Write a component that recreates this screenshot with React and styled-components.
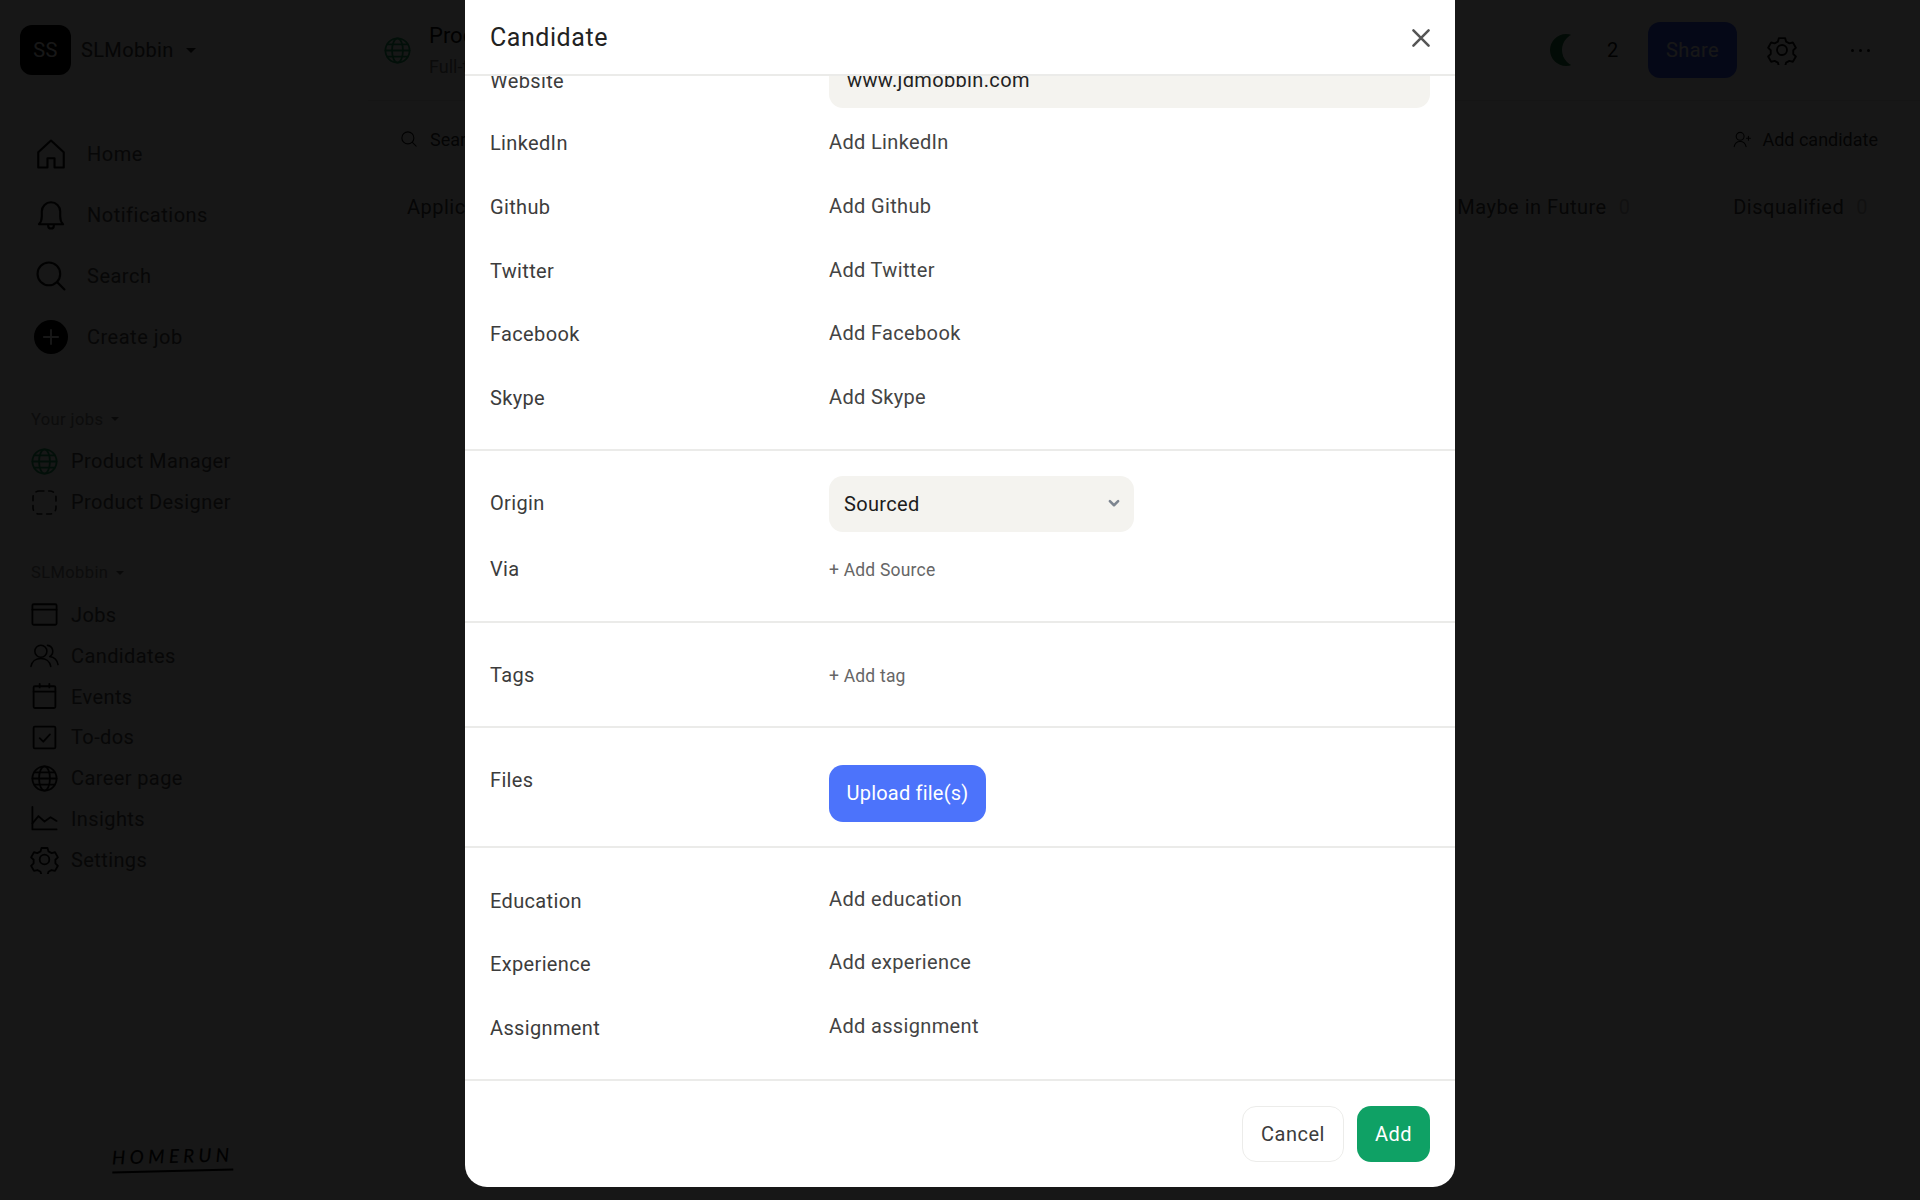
import React from "react";
import styled, { createGlobalStyle } from "styled-components";

const Global = createGlobalStyle`
  html, body { margin: 0; padding: 0; height: 100%; background: #fff; }
  #root { height: 100%; }
  * { box-sizing: border-box; }
  body { font-family: Roboto, "Liberation Sans", sans-serif; color: #111; }
`;

const Page = styled.div`position: relative; width: 1920px; height: 1200px; overflow: hidden; display: flex;`;
const Sidebar = styled.aside`
  width: 355px; flex: none; display: flex; flex-direction: column; background: #f6f6f6; padding: 25px 20px 28px;
`;
const Brand = styled.div`display: flex; align-items: center; height: 50px; gap: 10px; font-size: 20px; letter-spacing: .35px; color: #444; margin-bottom: 48px;`;
const BrandMark = styled.div`
  width: 51px; height: 50px; border-radius: 12px; background: #000; color: #fff; display: flex; align-items: center; justify-content: center; font-size: 20px;
`;
const Caret = styled.span`
  display: inline-block; width: 0; height: 0; border-left: ${p => p.$s || 5}px solid transparent; border-right: ${p => p.$s || 5}px solid transparent;
  border-top: ${p => p.$s || 5}px solid ${p => p.$c || "#000"}; margin-left: ${p => p.$m || 4}px;
`;
const PrimaryNav = styled.nav`display: flex; flex-direction: column; padding-left: 14px; margin-bottom: 38px;`;
const PrimaryItem = styled.div`display: flex; align-items: center; height: 61px; gap: 19px; font-size: 20px; letter-spacing: .5px; color: #555; svg { width: 34px; height: 34px; flex: none; }`;
const GroupTitle = styled.div`display: flex; align-items: center; height: 28px; padding-left: 11px; margin-bottom: 8px; font-size: 16.5px; letter-spacing: .4px; color: #888;`;
const SecondaryNav = styled.nav`display: flex; flex-direction: column; padding-left: 10px; margin-bottom: 36px;`;
const SecondaryItem = styled.div`display: flex; align-items: center; height: 40.8px; gap: 12px; font-size: 20px; letter-spacing: .4px; color: #555; svg { width: 29px; height: 29px; flex: none; }`;
const LogoWrap = styled.div`margin-top: auto; padding-left: 92px;`;
const Logo = styled.div`
  display: inline-block; font-size: 19px; font-style: italic; font-weight: 500; letter-spacing: 4.2px; border-bottom: 2px solid #000; line-height: 20px; padding-bottom: 4px; transform: rotate(-1.4deg); font-family: Lato, sans-serif;
`;

const Main = styled.main`flex: 1; display: flex; flex-direction: column; min-width: 0; background: #fff;`;
const Header = styled.header`
  height: 101px; margin-left: 13px; display: flex; align-items: center; border-bottom: 1px solid #e9e9e9; padding: 0 48px 0 15px;
`;
const JobInfo = styled.div`display: flex; align-items: center; gap: 17px;`;
const JobText = styled.div`display: flex; flex-direction: column; gap: 8px;`;
const JobTitle = styled.div`font-size: 22px;`;
const JobMeta = styled.div`font-size: 18px; color: #777;`;
const HeaderRight = styled.div`margin-left: auto; display: flex; align-items: center;`;
const Avatars = styled.div`display: flex; align-items: center; margin-right: 11px;`;
const Avatar = styled.div`width: ${p => p.$size}px; height: ${p => p.$size}px; border-radius: 50%; background: ${p => p.$bg}; margin-left: ${p => p.$ml || 0}px;`;
const Count = styled.div`font-size: 20px; color: #111; margin-right: 30px; width: 11px;`;
const ShareButton = styled.div`
  width: 89px; height: 56px; border-radius: 12px; background: #3d5cff; color: #fff; font-size: 20px; display: flex; align-items: center; justify-content: center; letter-spacing: .4px; margin-right: 30px;
`;
const IconSlot = styled.div`display: flex; align-items: center; svg { display: block; }`;
const Dots = styled.div`display: flex; gap: 5px; margin-left: 54px; margin-right: 2px;`;
const Dot = styled.span`width: 3px; height: 3px; border-radius: 50%; background: #111;`;
const Toolbar = styled.div`height: 76px; display: flex; align-items: center; padding: 0 42px 0 45px; font-size: 18px; letter-spacing: ${p => p.$ls || 0}px; color: #333;`;
const ToolGroup = styled.div`display: flex; align-items: center; gap: ${p => p.$gap || 12}px; ${p => p.$end ? "margin-left: auto;" : ""}`;
const Columns = styled.div`height: 60px; display: flex; align-items: center; padding: 0 52px 0 52px; font-size: 20px; letter-spacing: .5px; color: #444;`;
const Column = styled.div`display: flex; gap: 12px; width: ${p => p.$w || "auto"}; ${p => p.$end ? "margin-left: auto;" : ""}`;
const ZeroCount = styled.span`color: #bbb;`;

const Overlay = styled.div`position: absolute; inset: 0; background: rgba(0,0,0,.91);`;
const Modal = styled.div`
  position: absolute; left: 465px; top: 0; width: 990px; height: 1187px; background: #fff; border-radius: 0 0 22px 22px; overflow: hidden; display: flex; flex-direction: column;
`;
const ModalHeader = styled.div`
  flex: none; height: 76px; display: flex; align-items: center; justify-content: space-between; padding: 1px 20px 0 25px; border-bottom: 2px solid #ebebe9; background: #fff; font-size: 25px; letter-spacing: .55px; color: #222; z-index: 1;
`;
const ModalBody = styled.div`flex: 1; min-height: 0; overflow: hidden; display: flex; flex-direction: column; justify-content: flex-end;`;
const Section = styled.section`
  flex: none; padding: ${p => p.$pad}; border-bottom: 2px solid #ebebe9;
`;
const SocialList = styled.div`padding-top: ${p => p.$top}px;`;
const Row = styled.div`
  display: grid; grid-template-columns: 339px 1fr; align-items: ${p => p.$top ? "start" : "center"}; height: ${p => p.$h || "63.7px"};
`;
const Label = styled.div`font-size: 20px; letter-spacing: .35px; color: #3c3c3c; position: relative; top: ${p => p.$shift ?? 1}px;`;
const Value = styled.div`font-size: 20px; letter-spacing: .35px; color: #444; position: relative; top: ${p => p.$shift ?? -1}px;`;
const Muted = styled.div`font-size: 17.5px; letter-spacing: .2px; color: #666; position: relative; top: ${p => p.$shift ?? 0}px;`;
const Input = styled.div`
  height: 56px; border-radius: 14px; background: #f4f3ef; display: flex; align-items: center; padding: 0 18px; font-size: 20px; letter-spacing: .35px; color: #222;
`;
const Select = styled.div`
  width: 305px; height: 56px; border-radius: 14px; background: #f4f3ef; display: flex; align-items: center; justify-content: space-between; padding: 0 11px 0 15px; font-size: 20px; letter-spacing: .35px; color: #1c1c1c;
`;
const ChevronSlot = styled.span`display: flex; position: relative; top: -1px;`;
const UploadButton = styled.div`
  width: 157px; height: 57px; border-radius: 14px; background: #4c73fb; color: #fff; display: flex; align-items: center; justify-content: center; font-size: 20px; letter-spacing: .2px;
`;
const Footer = styled.div`flex: none; height: 106px; display: flex; align-items: flex-start; justify-content: flex-end; gap: 13px; padding: 25px 25px 0;`;
const CancelButton = styled.div`
  width: 102px; height: 56px; border-radius: 14px; border: 1px solid #ececea; display: flex; align-items: center; justify-content: center; font-size: 20px; letter-spacing: .5px; color: #3c3c3c; background: #fff;
`;
const AddButton = styled.div`
  width: 73px; height: 56px; border-radius: 14px; background: #0fa165; color: #fff; display: flex; align-items: center; justify-content: center; font-size: 20px; letter-spacing: .5px;
`;

const S = ({ children, size = 24, sw = 1.5, color = "#111", vb = 24 }) => (
  <svg width={size} height={size} viewBox={`0 0 ${vb} ${vb}`} fill="none" stroke={color} strokeWidth={sw} strokeLinecap="round" strokeLinejoin="round">{children}</svg>
);
const HomeI = () => <S><path d="M3 21.5V10.8L12 2.5l9 8.3v10.7h-6.5v-6.5h-5v6.5z" /></S>;
const BellI = () => <S><path d="M3.5 18.5c1.6-1.6 2-3 2-5.500V9.500a6.500 6.500 0 0 1 13 0V13c0 2.500.4 3.900 2 5.500zM10 18.500v1a2 2 0 0 0 4 0v-1" /></S>;
const SearchI = ({ size, sw, color }) => <S size={size} sw={sw} color={color}><circle cx="10.500" cy="10.500" r="8" /><path d="M16.500 16.500l5 5" /></S>;
const PlusI = () => (
  <svg viewBox="0 0 24 24"><circle cx="12" cy="12" r="12" fill="#000" /><path d="M12 6.500v11M6.500 12h11" stroke="#fff" strokeWidth="1.300" /></svg>
);
const GlobeI = ({ color = "#111", size }) => <S color={color} size={size}><circle cx="12" cy="12" r="10" /><path d="M2 12h20M3.500 7h17M3.500 17h17" /><ellipse cx="12" cy="12" rx="4.500" ry="10" /></S>;
const DashedI = () => <S color="#222" sw={1.300}><rect x="2.500" y="2.500" width="19" height="19" rx="5" strokeDasharray="4 4" /></S>;
const JobsI = () => <S><rect x="2" y="3.500" width="20" height="17" rx="1" /><path d="M2 8h20" /></S>;
const PeopleI = () => <S sw={1.300}><circle cx="9" cy="8.500" r="5" /><path d="M.8 21c.7-4 4-6.500 8.200-6.500s7.500 2.500 8.200 6.500M14.500 3.600a5 5 0 0 1 1.800 9.300c3.700.6 6.200 3 6.900 6.600" /></S>;
const CalendarI = () => <S><rect x="3" y="3.500" width="18" height="18" rx="1" /><path d="M3 8h18M8 1.500v3M16 1.500v3" /></S>;
const TodoI = () => <S><rect x="3" y="3" width="18" height="18" rx="1" /><path d="M8 12.500l3 3 5.500-6" /></S>;
const ChartI = () => <S><path d="M2 2.500V21h20" /><path d="M2 16l5-6 5 4.500 5-3.500 5 3" /></S>;
const GearI = ({ size }) => <S size={size}><path d="M9.500 2.500h5l.8 2.800 2.600 1.400 2.800-.7 2.400 4.200-2.100 2v3l2.100 2-2.400 4.200-2.800-.7-2.600 1.400-.8 2.800h-5l-.8-2.800-2.600-1.400-2.800.7-2.400-4.200 2.100-2v-3l-2.100-2 2.400-4.200 2.800.7 2.600-1.400z" /><circle cx="12" cy="12" r="4" /></S>;
const AddPersonI = () => <S size={19} sw={1.400}><circle cx="9" cy="8" r="5" /><path d="M1.500 21c.7-4 3.500-6.500 7.500-6.500s6.800 2.500 7.500 6.500M19.500 8v5M17 10.500h5" /></S>;
const CloseI = () => <S size={28} sw={2.200} color="#555"><path d="M5.500 5.500l13 13M18.500 5.500l-13 13" /></S>;
const ChevI = () => <S size={18} sw={3.400} color="#7d8590"><path d="M6.500 9.500l5.500 5.500 5.500-5.500" /></S>;

const primary = [["Home", HomeI], ["Notifications", BellI], ["Search", SearchI], ["Create job", PlusI]];
const jobs = [["Product Manager", () => <GlobeI color="#1fa060" />], ["Product Designer", DashedI]];
const org = [["Jobs", JobsI], ["Candidates", PeopleI], ["Events", CalendarI], ["To-dos", TodoI], ["Career page", GlobeI], ["Insights", ChartI], ["Settings", GearI]];
const socials = ["LinkedIn", "Github", "Twitter", "Facebook", "Skype"];
const extras = [["Education", "Add education"], ["Experience", "Add experience"], ["Assignment", "Add assignment"]];

export default function App() {
  return (
    <>
      <Global />
      <Page>
        <Sidebar>
          <Brand><BrandMark>SS</BrandMark><span>SLMobbin</span><Caret $m={2} $c="#222" /></Brand>
          <PrimaryNav>
            {primary.map(([t, I]) => <PrimaryItem key={t}><I />{t}</PrimaryItem>)}
          </PrimaryNav>
          <GroupTitle>Your jobs<Caret $s={4} $m={8} $c="#666" /></GroupTitle>
          <SecondaryNav>
            {jobs.map(([t, I]) => <SecondaryItem key={t}><I />{t}</SecondaryItem>)}
          </SecondaryNav>
          <GroupTitle>SLMobbin<Caret $s={4} $m={8} $c="#666" /></GroupTitle>
          <SecondaryNav>
            {org.map(([t, I]) => <SecondaryItem key={t}><I />{t}</SecondaryItem>)}
          </SecondaryNav>
          <LogoWrap><Logo>HOMERUN</Logo></LogoWrap>
        </Sidebar>
        <Main>
          <Header>
            <JobInfo>
              <GlobeI color="#1fa060" size={29} />
              <JobText><JobTitle>Product Manager</JobTitle><JobMeta>Full-time</JobMeta></JobText>
            </JobInfo>
            <HeaderRight>
              <Avatars><Avatar $size={32} $bg="#1f7a44" /><Avatar $size={34} $bg="#ffffff" $ml={-20} /></Avatars>
              <Count>2</Count>
              <ShareButton>Share</ShareButton>
              <IconSlot><GearI size={30} /></IconSlot>
              <Dots><Dot /><Dot /><Dot /></Dots>
            </HeaderRight>
          </Header>
          <Toolbar>
            <ToolGroup $gap={12}><SearchI size={18} /><span>Search</span></ToolGroup>
            <ToolGroup $end $gap={10}><AddPersonI /><span>Add candidate</span></ToolGroup>
          </Toolbar>
          <Columns>
            <Column>Applicants</Column>
            <Column $end $w="276px">Maybe in Future <ZeroCount>0</ZeroCount></Column>
            <Column>Disqualified <ZeroCount>0</ZeroCount></Column>
          </Columns>
        </Main>
        <Overlay />
        <Modal>
          <ModalHeader>Candidate<CloseI /></ModalHeader>
          <ModalBody>
            <Section $pad="0 25px 20px">
              <Row $h="auto"><Label>Website</Label><Input>www.jdmobbin.com</Input></Row>
              <SocialList $top={3}>
                {socials.map(s => <Row key={s}><Label>{s}</Label><Value $shift={0}>Add {s}</Value></Row>)}
              </SocialList>
            </Section>
            <Section $pad="25px 25px 0">
              <Row $h="56px"><Label $shift={-1}>Origin</Label>
                <Select>Sourced<ChevronSlot><ChevI /></ChevronSlot></Select></Row>
              <Row $h="89px"><Label $shift={-7}>Via</Label><Muted $shift={-6}>+ Add Source</Muted></Row>
            </Section>
            <Section $pad="0 25px">
              <Row $h="103px"><Label>Tags</Label><Muted $shift={2}>+ Add tag</Muted></Row>
            </Section>
            <Section $pad="37px 25px 24px">
              <Row $h="57px" $top><Label $shift={3}>Files</Label><UploadButton>Upload file(s)</UploadButton></Row>
            </Section>
            <Section $pad="20px 25px 20px">
              {extras.map(([l, v]) => <Row key={l}><Label>{l}</Label><Value>{v}</Value></Row>)}
            </Section>
          </ModalBody>
          <Footer><CancelButton>Cancel</CancelButton><AddButton>Add</AddButton></Footer>
        </Modal>
      </Page>
    </>
  );
}
